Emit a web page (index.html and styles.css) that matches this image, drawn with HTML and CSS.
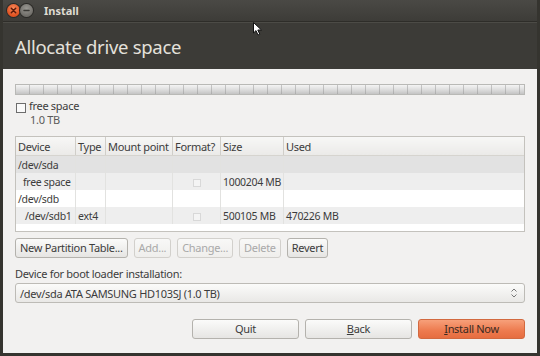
FILE: index.html
```html
<!DOCTYPE html>
<html lang="en">
	<head>
		<meta charset="UTF-8">
		<title>Install</title>
		<link rel="stylesheet" href="styles.css">
	</head>
	<body>
		<div class="window">
			<!-- Title bar -->
			<div class="titlebar">
				<span class="wbtn close">
					<svg width="13" height="13" viewBox="0 0 13 13"><path d="M4.3 4.3 L8.7 8.7 M8.7 4.3 L4.3 8.7" stroke="#5a1a0a" stroke-width="1.5" stroke-linecap="round"/></svg>
				</span>
				<span class="wbtn minimize">
					<svg width="13" height="13" viewBox="0 0 13 13"><path d="M4 6.5 H9" stroke="#3a3935" stroke-width="1.5" stroke-linecap="round"/></svg>
				</span>
				<span class="wtitle">Install</span>
			</div>

			<!-- Page header -->
			<div class="header">
				<h1>Allocate drive space</h1>
			</div>

			<div class="content">
				<div class="partbar"></div>

				<div class="legend">
					<span class="swatch"></span>
					<div class="legend-text">
						<div class="lname">free space</div>
						<div class="lsize">1.0 TB</div>
					</div>
				</div>

				<div class="tablebox">
					<table class="parts">
						<thead>
							<tr>
								<th class="c-dev">Device</th>
								<th class="c-type">Type</th>
								<th class="c-mount">Mount point</th>
								<th class="c-fmt">Format?</th>
								<th class="c-size">Size</th>
								<th>Used</th>
							</tr>
						</thead>
						<tbody>
							<tr class="r-disk">
								<td>/dev/sda</td><td></td><td></td><td></td><td></td><td></td>
							</tr>
							<tr class="r-alt">
								<td class="ind1">free space</td><td></td><td></td><td class="fmt"><span class="tick"></span></td><td>1000204 MB</td><td></td>
							</tr>
							<tr class="r-plain">
								<td>/dev/sdb</td><td></td><td></td><td></td><td></td><td></td>
							</tr>
							<tr class="r-alt">
								<td class="ind2">/dev/sdb1</td><td>ext4</td><td></td><td class="fmt"><span class="tick"></span></td><td>500105 MB</td><td>470226 MB</td>
							</tr>
						</tbody>
					</table>
				</div>

				<div class="actions">
					<button class="btn">New Partition Table...</button>
					<button class="btn" disabled>Add...</button>
					<button class="btn" disabled>Change...</button>
					<button class="btn" disabled>Delete</button>
					<button class="btn">Revert</button>
				</div>

				<div class="bootlabel">Device for boot loader installation:</div>
				<div class="combo">
					<span>/dev/sda ATA SAMSUNG HD103SJ (1.0 TB)</span>
					<span class="arrows">
						<svg width="6" height="10" viewBox="0 0 6 10"><path d="M0.5 3.5 L3 1 L5.5 3.5 M0.5 6.5 L3 9 L5.5 6.5" fill="none" stroke="#777" stroke-width="1"/></svg>
					</span>
				</div>

				<div class="footer">
					<button class="btn big">Quit</button>
					<button class="btn big"><u>B</u>ack</button>
					<button class="btn big primary"><u>I</u>nstall Now</button>
				</div>
			</div>

			<!-- mouse pointer in the capture -->
			<svg class="pointer" width="10" height="14" viewBox="0 0 10 14"><path d="M0.5 0.5 L0.5 11 L3 8.6 L5 13 L6.8 12.2 L4.8 8 L8.5 8 Z" fill="#fff" stroke="#111" stroke-width="1"/></svg>
		</div>
	</body>
</html>
```

FILE: styles.css
```css
body {
	margin: 0;
	background: #3c3b37;
	font-family: 'Noto Sans', 'Open Sans', sans-serif;
	font-size: 11px;
	letter-spacing: -0.3px;
	color: #3c3c3c;
}

.window {
	position: relative;
	width: 540px;
	height: 356px;
	box-sizing: border-box;
	background: #3c3b37;
	border: 3px solid #35342f;
	border-top: 0;
	display: flex;
	flex-direction: column;
	overflow: hidden;
}

/* Title bar */
.titlebar {
	height: 21px;
	display: flex;
	align-items: center;
	padding-left: 4px;
	background: linear-gradient(#4a4945, #3d3c38);
	border-bottom: 1px solid #2e2d29;
}

.wbtn {
	width: 13px;
	height: 13px;
	border-radius: 50%;
	display: flex;
}

.wbtn.close {
	background: radial-gradient(circle at 50% 35%, #f88a5c, #e0501f 70%);
	box-shadow: 0 0 0 1px #2b2a27;
}

.wbtn.minimize {
	background: radial-gradient(circle at 50% 35%, #9a9893, #6f6d68 70%);
	box-shadow: 0 0 0 1px #2b2a27;
}

.wtitle {
	margin-left: 11px;
	font-weight: bold;
	font-size: 11px;
	letter-spacing: 0;
	color: #dfdbd2;
}

/* Header */
.header {
	height: 46px;
	border-top: 1px solid #4c4b46;
	display: flex;
	align-items: center;
	padding-left: 12px;
	background: #3c3b37;
}

.header h1 {
	margin: 0;
	font-weight: normal;
	font-size: 18.5px;
	letter-spacing: -0.3px;
	color: #e4e1db;
}

/* Main content */
.content {
	flex: 1;
	background: #f2f1f0;
	padding: 15px 12px 0 12px;
	display: flex;
	flex-direction: column;
}

.partbar {
	height: 11px;
	border: 1px solid #b9b9b6;
	box-sizing: border-box;
	background:
		repeating-linear-gradient(90deg, transparent 0, transparent 13px, rgba(150, 150, 150, 0.5) 13px, rgba(150, 150, 150, 0.5) 14px),
		linear-gradient(#f4f4f4, #dcdcdc 55%, #c4c4c4);
}

.legend {
	display: flex;
	margin-top: 4px;
	height: 30px;
}

.swatch {
	width: 8px;
	height: 8px;
	border: 1px solid #6d6d6d;
	background: #fafafa;
	margin: 4px 3px 0 1px;
}

.legend-text {
	line-height: 14px;
}

.lsize {
	margin-left: 1px;
	color: #5a5a5a;
}

/* Partition table */
.tablebox {
	margin-top: 7px;
	height: 96px;
	box-sizing: border-box;
	border: 1px solid #c4c2bd;
	background: #fff;
}

.parts {
	width: 100%;
	border-collapse: collapse;
	table-layout: fixed;
}

.parts th {
	height: 18px;
	text-align: left;
	font-weight: normal;
	padding: 0 2px;
	white-space: nowrap;
	overflow: hidden;
	background: linear-gradient(#f7f7f6, #ebeae8);
	border-right: 1px solid #d0cec9;
	border-bottom: 1px solid #d6d4cf;
}

.parts th:last-child {
	border-right: 0;
}

.parts td {
	height: 17px;
	padding: 0 2px;
	font-size: 10.5px;
	white-space: nowrap;
	border-right: 1px solid #e2e2e0;
}

.parts td:last-child {
	border-right: 0;
}

.c-dev { width: 55px; }
.c-type { width: 25px; }
.c-mount { width: 62px; }
.c-fmt { width: 43px; }
.c-size { width: 58px; }

.r-disk td { background: #e2e2e2; }
.r-alt td { background: #eeeeee; }
.r-plain td { background: #ffffff; }

.ind1 { padding-left: 7px !important; }
.ind2 { padding-left: 9px !important; }

.fmt {
	text-align: center;
}

.tick {
	display: inline-block;
	width: 6px;
	height: 6px;
	border: 1px solid #d8d8d8;
	background: #f4f4f4;
	vertical-align: middle;
}

/* Buttons */
.actions {
	display: flex;
	gap: 6px;
	margin-top: 6px;
}

.btn {
	font-family: inherit;
	font-size: 11px;
	letter-spacing: -0.3px;
	color: #3c3c3c;
	height: 20px;
	padding: 0 4px;
	border: 1px solid #b4b2ad;
	border-radius: 3px;
	background: linear-gradient(#fbfbfa, #e6e5e3);
	line-height: 16px;
}

.btn:disabled {
	color: #a9a9a9;
	border-color: #d2d0cc;
	background: linear-gradient(#f8f8f7, #efeeec);
}

.btn u {
	text-decoration-thickness: 1px;
	text-underline-offset: 1px;
}

.bootlabel {
	margin-top: 9px;
	line-height: 14px;
}

.combo {
	margin-top: 2px;
	height: 20px;
	box-sizing: border-box;
	border: 1px solid #bdbbb6;
	border-radius: 3px;
	background: linear-gradient(#fbfbfa, #e9e8e6);
	display: flex;
	align-items: center;
	justify-content: space-between;
	padding: 0 7px 0 4px;
}

.arrows {
	display: flex;
}

.footer {
	display: flex;
	justify-content: flex-end;
	gap: 6px;
	margin-top: 16px;
}

.btn.big {
	width: 107px;
	height: 20px;
}

.btn.primary {
	border-color: #d2693f;
	background: linear-gradient(#f7a07a, #ed7a4e 60%, #e66d40);
	color: #3a2a22;
}

.pointer {
	position: absolute;
	left: 250px;
	top: 22px;
}
```
